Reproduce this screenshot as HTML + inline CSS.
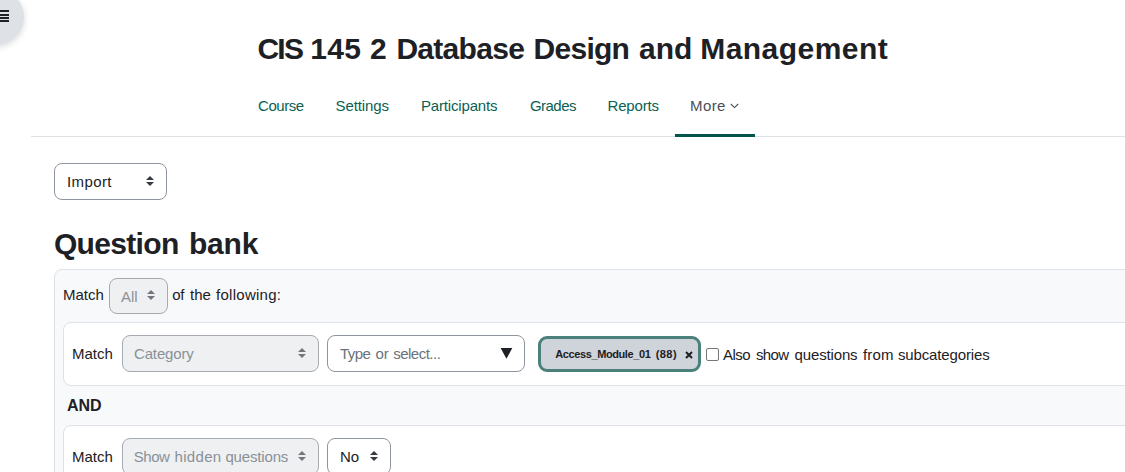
<!DOCTYPE html>
<html><head><meta charset="utf-8">
<style>
html,body{margin:0;padding:0;background:#fff;width:1125px;height:472px;overflow:hidden;position:relative;font-family:"Liberation Sans",sans-serif;color:#1d2125;}
.a{position:absolute;white-space:nowrap;line-height:1;}
#drawer{position:absolute;left:-32px;top:-11px;width:56px;height:56px;border-radius:50%;background:#dee2e6;box-shadow:0 2px 6px rgba(0,0,0,.15);}
.bars{position:absolute;left:0;width:9px;height:2px;background:#1d2125;}
.tt{top:34px;font-size:30px;font-weight:bold;}
.nav{top:98px;font-size:15px;color:#0b5f53;}
#navline{position:absolute;left:31px;top:136px;width:1094px;height:1px;background:#dee2e6;}
#navact{position:absolute;left:675px;top:134px;width:80px;height:3px;background:#03544a;}
.sel{position:absolute;box-sizing:border-box;border:1px solid #8f959e;border-radius:8px;background:#fff;}
.sel.dis{background:#eef0f2;border-color:#a6abb1;}
.ud{position:absolute;width:8px;height:10px;}
.qb{top:229px;font-size:30px;font-weight:bold;}
#fbox{position:absolute;left:54px;top:269px;width:1100px;height:260px;box-sizing:border-box;border:1px solid #dee2e6;border-radius:8px;background:#f8f9fa;}
.card{position:absolute;left:63px;width:1100px;box-sizing:border-box;border:1px solid #dee2e6;border-radius:8px;background:#fff;}
.t{font-size:15px;}
.g{color:#6a737b;}
.gd{color:#8a9097;}
</style></head><body>
<div id="drawer"></div>
<div class="bars" style="top:10px"></div>
<div class="bars" style="top:13.5px"></div>
<div class="bars" style="top:17px"></div>
<div class="bars" style="top:20px"></div>

<div class="a tt" style="left:257.5px;letter-spacing:-1.8px">CIS</div>
<div class="a tt" style="left:310.2px;letter-spacing:0.4px">145</div>
<div class="a tt" style="left:370px;letter-spacing:0px">2</div>
<div class="a tt" style="left:396.4px;letter-spacing:-0.71px">Database</div>
<div class="a tt" style="left:533.6px;letter-spacing:-0.74px">Design</div>
<div class="a tt" style="left:639px;letter-spacing:0px">and</div>
<div class="a tt" style="left:700.2px;letter-spacing:0.47px">Management</div>

<div class="a nav" style="left:258px;letter-spacing:-0.45px">Course</div>
<div class="a nav" style="left:335.5px;letter-spacing:-0.1px">Settings</div>
<div class="a nav" style="left:421px;letter-spacing:-0.17px">Participants</div>
<div class="a nav" style="left:530px;letter-spacing:-0.55px">Grades</div>
<div class="a nav" style="left:607.5px;letter-spacing:-0.15px">Reports</div>
<div class="a nav" style="left:690px;color:#495057;letter-spacing:0.4px">More</div>
<svg style="position:absolute;left:730px;top:103px" width="9" height="6" viewBox="0 0 9 6"><path d="M0.8 1 L4.5 4.6 L8.2 1" fill="none" stroke="#495057" stroke-width="1.1"/></svg>
<div id="navline"></div>
<div id="navact"></div>

<div class="sel" style="left:54px;top:163px;width:113px;height:37px"></div>
<div class="a t" style="left:67px;top:174px;color:#1d2125;letter-spacing:0.4px">Import</div>
<svg class="ud" style="left:146px;top:176px" viewBox="0 0 8 10"><path d="M0 4 L4 0 L8 4Z M0 6 L4 10 L8 6Z" fill="#343a40"/></svg>

<div class="a qb" style="left:53.9px;letter-spacing:-0.67px">Question</div><div class="a qb" style="left:188.9px;letter-spacing:-0.17px">bank</div>

<div id="fbox"></div>
<div class="a t" style="left:63px;top:287px">Match</div>
<div class="sel dis" style="left:109px;top:278px;width:59px;height:36px"></div>
<div class="a t gd" style="left:121px;top:289px">All</div>
<svg class="ud" style="left:147px;top:290px" viewBox="0 0 8 10"><path d="M0 4 L4 0 L8 4Z M0 6 L4 10 L8 6Z" fill="#70777e"/></svg>
<div class="a t" style="left:172.2px;top:287px;letter-spacing:-0.2px">of</div><div class="a t" style="left:190px;top:287px;letter-spacing:0px">the</div><div class="a t" style="left:216.1px;top:287px;letter-spacing:0.26px">following:</div>

<div class="card" style="top:322px;height:64px"></div>
<div class="a t" style="left:72px;top:346px">Match</div>
<div class="sel dis" style="left:122px;top:335px;width:197px;height:37px"></div>
<div class="a t gd" style="left:134px;top:346px;letter-spacing:-0.15px">Category</div>
<svg class="ud" style="left:298px;top:348px" viewBox="0 0 8 10"><path d="M0 4 L4 0 L8 4Z M0 6 L4 10 L8 6Z" fill="#70777e"/></svg>
<div class="sel" style="left:327px;top:335px;width:198px;height:37px"></div>
<div class="a t g" style="left:340.1px;top:346px;letter-spacing:-0.63px">Type</div><div class="a t g" style="left:375.6px;top:346px;letter-spacing:-0.3px">or</div><div class="a t g" style="left:393.2px;top:346px;letter-spacing:-0.51px">select...</div>
<svg style="position:absolute;left:500px;top:348px" width="13" height="11" viewBox="0 0 13 11"><path d="M0.6 0 L12.3 0 L6.45 10.8Z" fill="#1d2125"/></svg>

<div style="position:absolute;left:538px;top:336px;width:163px;height:36px;box-sizing:border-box;border:3px solid #4b817a;border-radius:9px;background:#ced4da"></div>
<div class="a" style="left:555.3px;top:349px;font-size:11px;font-weight:bold;letter-spacing:-0.4px">Access_Module_01</div><div class="a" style="left:655.7px;top:349px;font-size:11px;font-weight:bold;letter-spacing:0.43px">(88)</div>
<svg style="position:absolute;left:685px;top:350.5px" width="8" height="8" viewBox="0 0 8 8"><path d="M1 1L7 7M7 1L1 7" stroke="#1d2125" stroke-width="2"/></svg>
<div style="position:absolute;left:706px;top:348px;width:13px;height:13px;box-sizing:border-box;border:1px solid #767676;border-radius:2px;background:#fff"></div>
<div class="a t" style="left:723.1px;top:347px;letter-spacing:-0.53px">Also</div><div class="a t" style="left:756px;top:347px;letter-spacing:-0.67px">show</div><div class="a t" style="left:794.6px;top:347px;letter-spacing:-0.15px">questions</div><div class="a t" style="left:863px;top:347px;letter-spacing:0.13px">from</div><div class="a t" style="left:898px;top:347px;letter-spacing:-0.14px">subcategories</div>

<div class="a" style="left:67px;top:398px;font-size:16px;font-weight:bold">AND</div>

<div class="card" style="top:425px;height:64px"></div>
<div class="a t" style="left:72px;top:449px">Match</div>
<div class="sel dis" style="left:122px;top:438px;width:197px;height:37px"></div>
<div class="a t gd" style="left:133.8px;top:449px;letter-spacing:-0.5px">Show</div><div class="a t gd" style="left:174.6px;top:449px;letter-spacing:0.3px">hidden</div><div class="a t gd" style="left:225.4px;top:449px;letter-spacing:-0.16px">questions</div>
<svg class="ud" style="left:298px;top:451px" viewBox="0 0 8 10"><path d="M0 4 L4 0 L8 4Z M0 6 L4 10 L8 6Z" fill="#70777e"/></svg>
<div class="sel" style="left:327px;top:438px;width:64px;height:37px"></div>
<div class="a t" style="left:340px;top:449px">No</div>
<svg class="ud" style="left:370px;top:451px" viewBox="0 0 8 10"><path d="M0 4 L4 0 L8 4Z M0 6 L4 10 L8 6Z" fill="#343a40"/></svg>
</body></html>
